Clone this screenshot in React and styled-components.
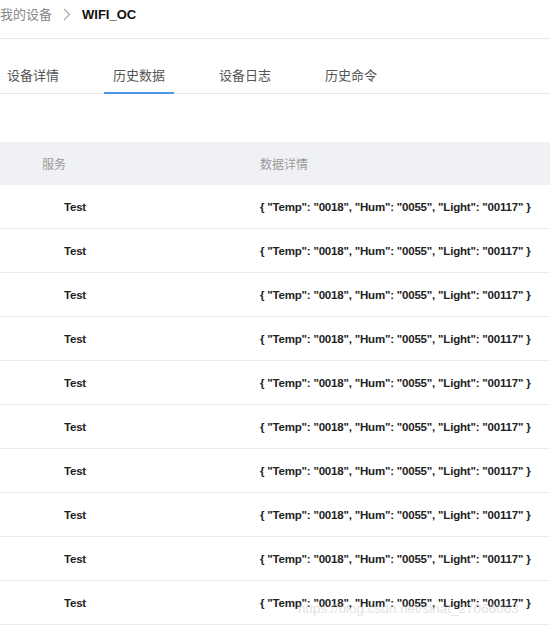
import React from 'react';
import styled, { createGlobalStyle } from 'styled-components';

const rows = Array.from({ length: 10 }, () => ({
  service: 'Test',
  data: '{ "Temp": "0018", "Hum": "0055", "Light": "00117" }',
}));

const tabs = ['设备详情', '历史数据', '设备日志', '历史命令'];

const
  GlobalStyle = createGlobalStyle`
    html, body {
      margin: 0;
      padding: 0;
      background: #fff;
    }
    body {
      font-family: "Liberation Sans", Arial, "Noto Sans CJK SC", sans-serif;
    }
  `,
  Page = styled.div`
    position: relative;
    width: 550px;
    height: 626px;
    overflow: hidden;
    background: #fff;
  `,
  Breadcrumb = styled.div`
    display: flex;
    align-items: flex-start;
    height: 39px;
    padding-top: 7px;
    border-bottom: 1px solid #e8e8e8;
    box-sizing: border-box;
    font-size: 13px;
    line-height: 16px;
  `,
  Crumb = styled.span`
    color: #888;
  `,
  Chevron = styled.svg`
    margin: 1px 11px 0 11px;
  `,
  Current = styled.span`
    color: #111;
    font-weight: bold;
  `,
  TabBar = styled.div`
    display: flex;
    gap: 36px;
    margin-top: 15px;
    margin-left: -2px;
    border-bottom: 1px solid #e8e8e8;
  `,
  Tab = styled.div`
    width: 70px;
    text-align: center;
    font-size: 13px;
    line-height: 15px;
    color: #555;
    padding: 14px 0 9px;
    border-bottom: 2px solid ${p => (p.active ? '#4d93e8' : 'transparent')};
    margin-bottom: -1px;
  `,
  Table = styled.div`
    margin-top: 48px;
  `,
  HeadRow = styled.div`
    display: grid;
    grid-template-columns: 260px 1fr;
    height: 43px;
    align-items: center;
    background: #f0f1f5;
    font-size: 12px;
    color: #999;
  `,
  HeadCell = styled.div`
    padding-left: ${p => p.indent || 0}px;
  `,
  Row = styled.div`
    display: grid;
    grid-template-columns: 260px 1fr;
    height: 44px;
    align-items: center;
    border-bottom: 1px solid #ebebeb;
    box-sizing: border-box;
    font-size: 11.5px;
    letter-spacing: -0.2px;
    font-weight: bold;
    color: #222;
  `,
  Cell = styled.div`
    padding-left: ${p => p.indent || 0}px;
    white-space: nowrap;
  `,
  Watermark = styled.div`
    position: absolute;
    left: 298px;
    top: 601px;
    font-size: 13.5px;
    color: rgba(200, 200, 200, 0.55);
    pointer-events: none;
  `;

const App = () => {
  return (
    <Page>
      <GlobalStyle />
      <Breadcrumb>
        <Crumb>我的设备</Crumb>
        <Chevron width="8" height="13" viewBox="0 0 8 13">
          <path d="M1 1l5.5 5.5L1 12" fill="none" stroke="#a8b0bc" strokeWidth="1.3" />
        </Chevron>
        <Current>WIFI_OC</Current>
      </Breadcrumb>
      <TabBar>
        {tabs.map((t, i) => (
          <Tab key={t} active={i === 1}>{t}</Tab>
        ))}
      </TabBar>
      <Table>
        <HeadRow>
          <HeadCell indent={42}>服务</HeadCell>
          <HeadCell>数据详情</HeadCell>
        </HeadRow>
        {rows.map((r, i) => (
          <Row key={i}>
            <Cell indent={64}>{r.service}</Cell>
            <Cell>{r.data}</Cell>
          </Row>
        ))}
      </Table>
      <Watermark>https://blog.csdn.net/sinat_27066063</Watermark>
    </Page>
  );
};

export default App;
